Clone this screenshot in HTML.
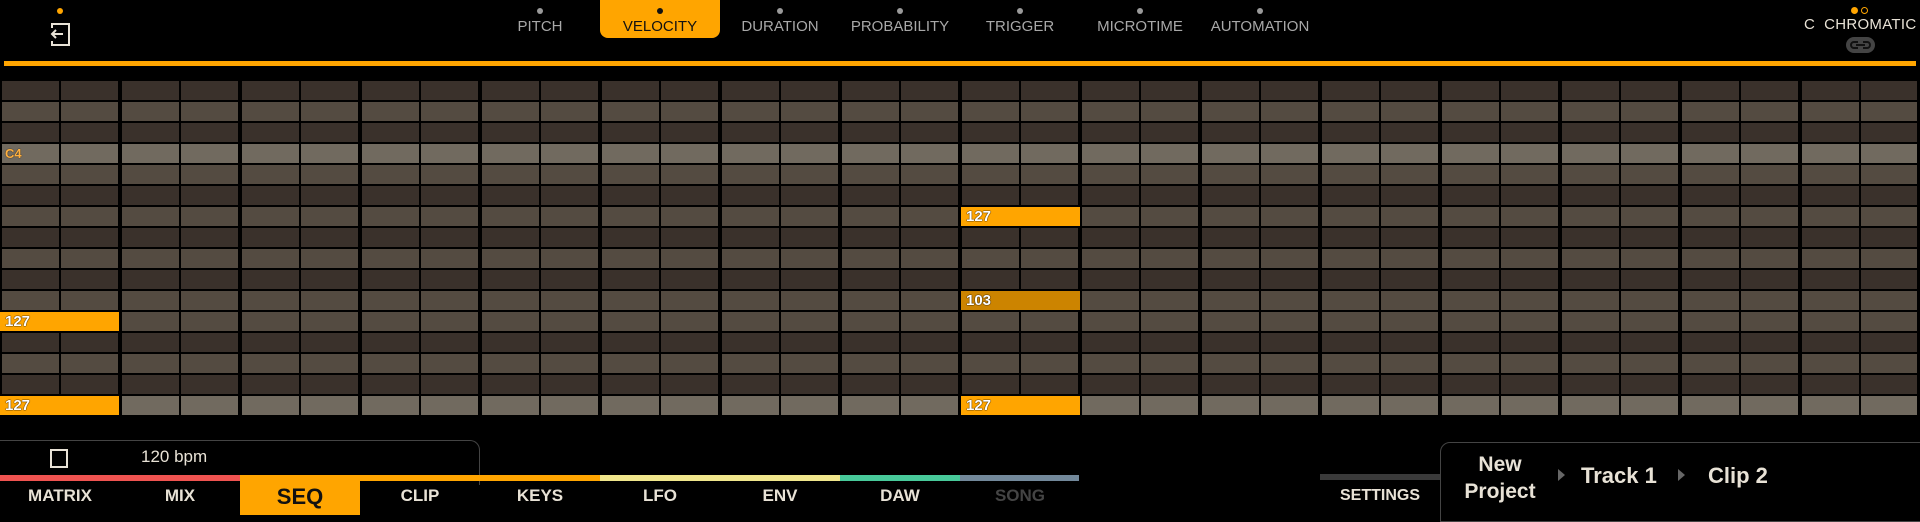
<!DOCTYPE html>
<html><head><meta charset="utf-8"><style>
*{margin:0;padding:0;box-sizing:border-box}
body{width:1920px;height:515px;background:#000;position:relative;overflow:hidden;font-family:"Liberation Sans",sans-serif}
.a{position:absolute}
.tab{position:absolute;top:0;width:120px;height:38px;text-align:center;color:#a8a8a8;font-size:15px}
.tab i{display:block;width:6px;height:6px;border-radius:3px;background:#9a9a9a;margin:8px auto 4px}
.row{position:absolute;left:0;width:1917px;height:19px}
.d{background:#3a312b}.m{background:#544b41}.l{background:#716a5f}
.note{position:absolute;height:19px;width:119px;color:#fff;font-size:15px;font-weight:bold;padding-left:5px;line-height:19px;text-shadow:0 0 1px #000,0 0 1px #000;z-index:3}
.bt{position:absolute;top:481px;width:120px;height:34px;text-align:center;color:#e8e2d6;font-size:17px;font-weight:bold;line-height:30px}
</style></head><body>
<div class="a" style="left:57px;top:8px;width:6px;height:6px;border-radius:3px;background:#ffa500"></div>
<svg class="a" style="left:48px;top:21px" width="24" height="26" viewBox="0 0 24 26"><path d="M4 7V3h17v21H4v-4" fill="none" stroke="#e8e2d6" stroke-width="2"/><path d="M15 13H4M8 9l-4 4 4 4" fill="none" stroke="#e8e2d6" stroke-width="2"/></svg>
<div class="tab" style="left:480px"><i></i>PITCH</div>
<div class="tab" style="left:600px;background:#ffa500;color:#111;border-radius:0 0 8px 8px"><i style="background:#111"></i>VELOCITY</div>
<div class="tab" style="left:720px"><i></i>DURATION</div>
<div class="tab" style="left:840px"><i></i>PROBABILITY</div>
<div class="tab" style="left:960px"><i></i>TRIGGER</div>
<div class="tab" style="left:1080px"><i></i>MICROTIME</div>
<div class="tab" style="left:1200px"><i></i>AUTOMATION</div>
<div class="a" style="left:1851px;top:7px;width:7px;height:7px;border-radius:4px;background:#ffa500"></div>
<div class="a" style="left:1861px;top:7px;width:7px;height:7px;border-radius:4px;border:1.5px solid #ffa500"></div>
<div class="a" style="left:1804px;top:16px;color:#e8e2d6;font-size:15px;letter-spacing:0.3px">C&nbsp; CHROMATIC</div>
<div class="a" style="left:1846px;top:37px;width:29px;height:16px;border-radius:8px;background:#444"></div>
<svg class="a" style="left:1849px;top:39px" width="23" height="12" viewBox="0 0 23 12"><path d="M9 3H5a3 3 0 0 0 0 6h4M14 3h4a3 3 0 0 1 0 6h-4M7 6h9" fill="none" stroke="#111" stroke-width="2"/></svg>
<div class="a" style="left:4px;top:61px;width:1912px;height:5px;background:#ffa500"></div>

<div class="row d" style="top:81px"></div>
<div class="row m" style="top:102px"></div>
<div class="row d" style="top:123px"></div>
<div class="row l" style="top:144px"></div>
<div class="row m" style="top:165px"></div>
<div class="row d" style="top:186px"></div>
<div class="row m" style="top:207px"></div>
<div class="row d" style="top:228px"></div>
<div class="row m" style="top:249px"></div>
<div class="row d" style="top:270px"></div>
<div class="row m" style="top:291px"></div>
<div class="row m" style="top:312px"></div>
<div class="row d" style="top:333px"></div>
<div class="row m" style="top:354px"></div>
<div class="row d" style="top:375px"></div>
<div class="row l" style="top:396px"></div>
<div class="a" style="left:0;top:81px;width:1920px;height:336px;z-index:2;background:repeating-linear-gradient(90deg,#000 0 2px,transparent 2px 59px,#000 59px 61px,transparent 61px 118px,#000 118px 120px)"></div>
<div class="a" style="left:1917px;top:81px;width:3px;height:336px;background:#000;z-index:2"></div>
<div class="a" style="left:5px;top:146px;color:#ffb040;font-size:13px;font-weight:bold;text-shadow:0 0 1px #000;z-index:3">C4</div>
<div class="note" style="left:961px;top:207px;background:#ffa500">127</div>
<div class="note" style="left:961px;top:291px;background:#cc8400">103</div>
<div class="note" style="left:0;top:312px;background:#ffa500">127</div>
<div class="note" style="left:0;top:396px;background:#ffa500">127</div>
<div class="note" style="left:961px;top:396px;background:#ffa500">127</div>

<div class="a" style="left:-2px;top:440px;width:482px;height:45px;border:1.5px solid #444;border-radius:0 10px 0 0;border-bottom:none;border-left:none"></div>
<div class="a" style="left:50px;top:449px;width:18px;height:19px;border:2px solid #e8e2d6"></div>
<div class="a" style="left:141px;top:447px;color:#e8e2d6;font-size:17px">120 bpm</div>
<div class="a" style="left:0;top:475px;width:240px;height:6px;background:#ef5350"></div>
<div class="a" style="left:240px;top:475px;width:360px;height:6px;background:#ffa500"></div>
<div class="a" style="left:600px;top:475px;width:240px;height:6px;background:#f0e68c"></div>
<div class="a" style="left:840px;top:475px;width:120px;height:6px;background:#48c99a"></div>
<div class="a" style="left:960px;top:475px;width:119px;height:6px;background:#72889a"></div>
<div class="bt" style="left:0">MATRIX</div>
<div class="bt" style="left:120px">MIX</div>
<div class="bt" style="left:240px;background:#ffa500;color:#111;font-size:22px;line-height:32px">SEQ</div>
<div class="bt" style="left:360px">CLIP</div>
<div class="bt" style="left:480px">KEYS</div>
<div class="bt" style="left:600px">LFO</div>
<div class="bt" style="left:720px">ENV</div>
<div class="bt" style="left:840px">DAW</div>
<div class="bt" style="left:960px;color:#444">SONG</div>
<div class="a" style="left:1320px;top:474px;width:120px;height:6px;background:#3a3a3a"></div>
<div class="bt" style="left:1320px;font-size:16px">SETTINGS</div>
<div class="a" style="left:1440px;top:442px;width:490px;height:80px;border:1.5px solid #444;border-radius:10px 0 0 0"></div>
<div class="a" style="left:1440px;top:451px;width:120px;text-align:center;color:#e8e2d6;font-size:21px;font-weight:bold;line-height:27px">New<br>Project</div>
<div class="a" style="left:1558px;top:469px;width:0;height:0;border-left:7px solid #666;border-top:6px solid transparent;border-bottom:6px solid transparent"></div>
<div class="a" style="left:1581px;top:463px;color:#e8e2d6;font-size:22px;font-weight:bold">Track 1</div>
<div class="a" style="left:1678px;top:469px;width:0;height:0;border-left:7px solid #666;border-top:6px solid transparent;border-bottom:6px solid transparent"></div>
<div class="a" style="left:1708px;top:463px;color:#e8e2d6;font-size:22px;font-weight:bold">Clip 2</div>
</body></html>
